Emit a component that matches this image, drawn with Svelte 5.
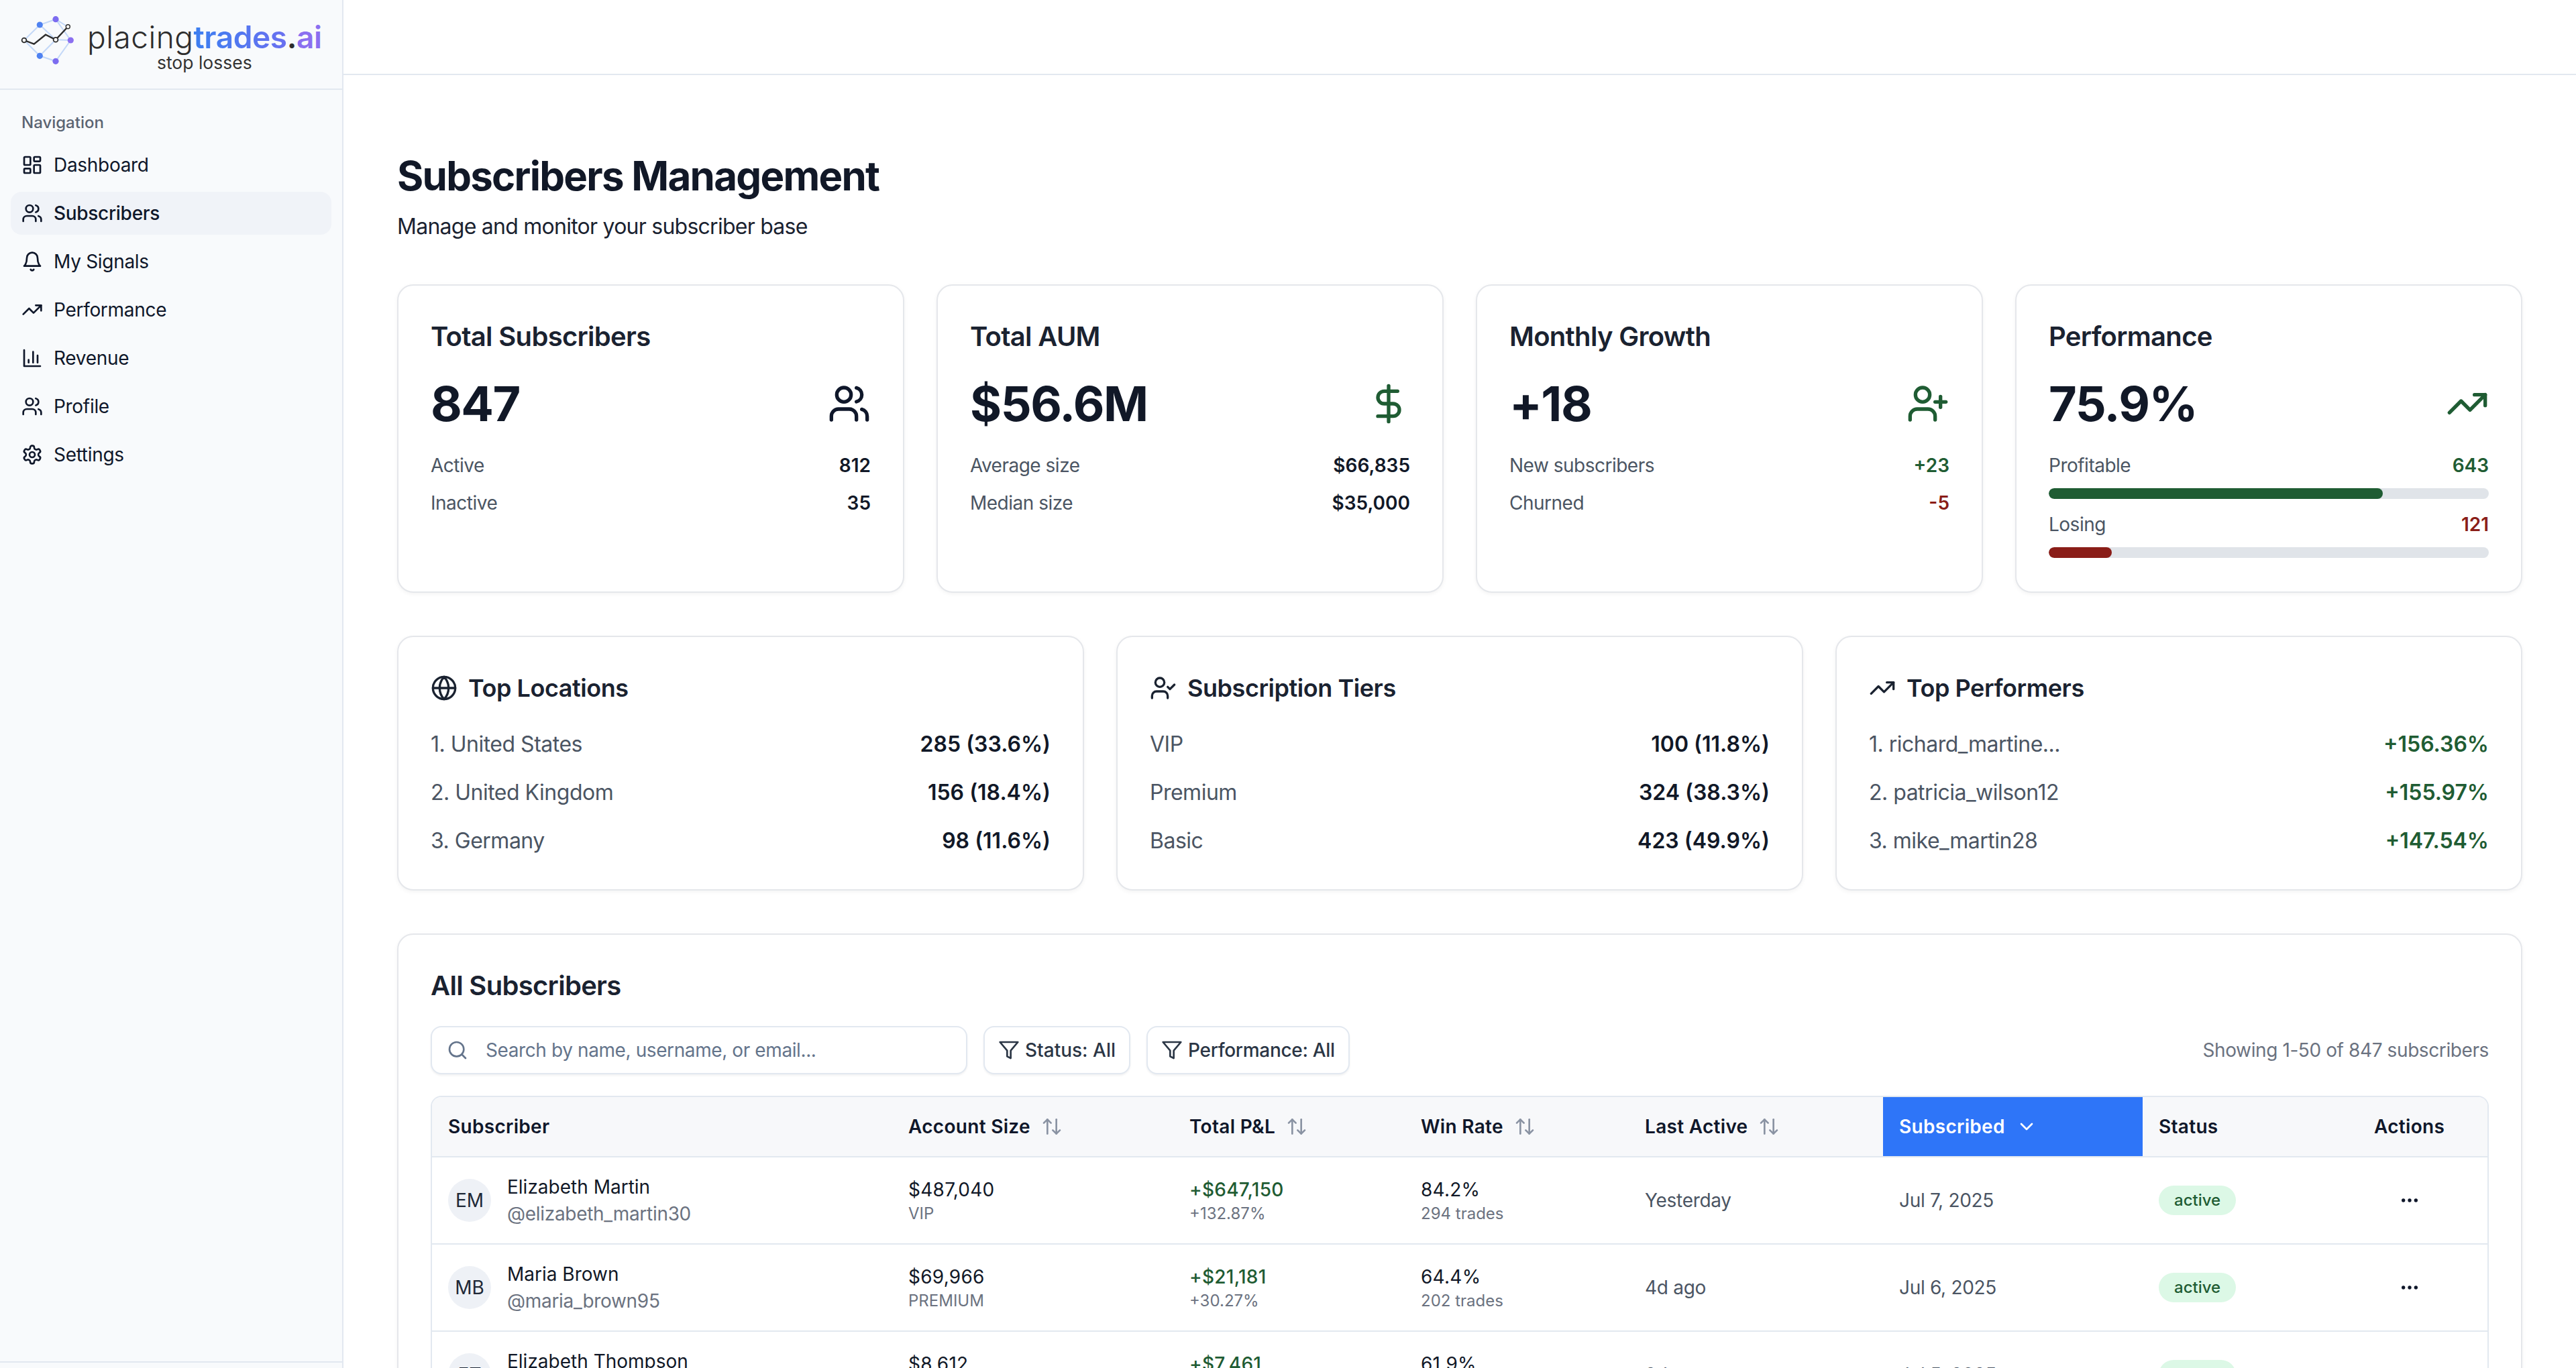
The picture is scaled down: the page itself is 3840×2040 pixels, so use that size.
<script>
  const personBase = ['M16 21v-2a4 4 0 0 0-4-4H6a4 4 0 0 0-4 4v2', 'M5 7a4 4 0 1 0 8 0a4 4 0 1 0-8 0'];
  const icons = {
    dashboard: ['M4 3h5a1 1 0 0 1 1 1v7a1 1 0 0 1-1 1H4a1 1 0 0 1-1-1V4a1 1 0 0 1 1-1z','M15 3h5a1 1 0 0 1 1 1v3a1 1 0 0 1-1 1h-5a1 1 0 0 1-1-1V4a1 1 0 0 1 1-1z','M15 12h5a1 1 0 0 1 1 1v7a1 1 0 0 1-1 1h-5a1 1 0 0 1-1-1v-7a1 1 0 0 1 1-1z','M4 16h5a1 1 0 0 1 1 1v3a1 1 0 0 1-1 1H4a1 1 0 0 1-1-1v-3a1 1 0 0 1 1-1z'],
    users: [...personBase, 'M22 21v-2a4 4 0 0 0-3-3.87', 'M16 3.13a4 4 0 0 1 0 7.75'],
    bell: ['M6 8a6 6 0 0 1 12 0c0 7 3 9 3 9H3s3-2 3-9', 'M10.3 21a1.94 1.94 0 0 0 3.4 0'],
    trending: ['M22 7 13.5 15.5 8.5 10.5 2 17', 'M16 7h6v6'],
    chart: ['M3 3v18h18', 'M18 17V9', 'M13 17V5', 'M8 17v-3'],
    settings: ['M12.22 2h-.44a2 2 0 0 0-2 2v.18a2 2 0 0 1-1 1.73l-.43.25a2 2 0 0 1-2 0l-.15-.08a2 2 0 0 0-2.73.73l-.22.38a2 2 0 0 0 .73 2.73l.15.1a2 2 0 0 1 1 1.72v.51a2 2 0 0 1-1 1.74l-.15.09a2 2 0 0 0-.73 2.73l.22.38a2 2 0 0 0 2.73.73l.15-.08a2 2 0 0 1 2 0l.43.25a2 2 0 0 1 1 1.73V20a2 2 0 0 0 2 2h.44a2 2 0 0 0 2-2v-.18a2 2 0 0 1 1-1.73l.43-.25a2 2 0 0 1 2 0l.15.08a2 2 0 0 0 2.73-.73l.22-.39a2 2 0 0 0-.73-2.73l-.15-.08a2 2 0 0 1-1-1.74v-.5a2 2 0 0 1 1-1.74l.15-.09a2 2 0 0 0 .73-2.73l-.22-.38a2 2 0 0 0-2.73-.73l-.15.08a2 2 0 0 1-2 0l-.43-.25a2 2 0 0 1-1-1.73V4a2 2 0 0 0-2-2z', 'M9 12a3 3 0 1 0 6 0a3 3 0 1 0-6 0'],
    dollar: ['M12 2v20', 'M17 5H9.5a3.5 3.5 0 0 0 0 7h5a3.5 3.5 0 0 1 0 7H6'],
    userPlus: [...personBase, 'M19 8v6', 'M22 11h-6'],
    userCheck: [...personBase, 'M16 11l2 2 4-4'],
    globe: ['M2 12a10 10 0 1 0 20 0a10 10 0 1 0-20 0', 'M12 2a14.5 14.5 0 0 0 0 20 14.5 14.5 0 0 0 0-20', 'M2 12h20'],
    filter: ['M22 3H2l8 9.46V19l4 2v-8.54L22 3z'],
    search: ['M3 11a8 8 0 1 0 16 0a8 8 0 1 0-16 0', 'M21 21l-4.3-4.3'],
    sort: ['M21 16l-4 4-4-4', 'M17 20V4', 'M3 8l4-4 4 4', 'M7 4v16'],
    chevron: ['M6 9l6 6 6-6'],
    dots: ['M11 12a1 1 0 1 0 2 0a1 1 0 1 0-2 0', 'M18 12a1 1 0 1 0 2 0a1 1 0 1 0-2 0', 'M4 12a1 1 0 1 0 2 0a1 1 0 1 0-2 0']
  };

  const nav = [
    ['dashboard', 'Dashboard'], ['users', 'Subscribers', true], ['bell', 'My Signals'],
    ['trending', 'Performance'], ['chart', 'Revenue'], ['users', 'Profile'], ['settings', 'Settings']
  ];

  const stats = [
    { title: 'Total Subscribers', value: '847', icon: 'users', tone: 'ink', rows: [['Active', '812', ''], ['Inactive', '35', '']] },
    { title: 'Total AUM', value: '$56.6M', icon: 'dollar', tone: 'up', rows: [['Average size', '$66,835', ''], ['Median size', '$35,000', '']] },
    { title: 'Monthly Growth', value: '+18', icon: 'userPlus', tone: 'up', rows: [['New subscribers', '+23', 'up'], ['Churned', '-5', 'down']] }
  ];

  const summaries = [
    { title: 'Top Locations', icon: 'globe', tone: '', rows: [['1. United States', '285 (33.6%)'], ['2. United Kingdom', '156 (18.4%)'], ['3. Germany', '98 (11.6%)']] },
    { title: 'Subscription Tiers', icon: 'userCheck', tone: '', rows: [['VIP', '100 (11.8%)'], ['Premium', '324 (38.3%)'], ['Basic', '423 (49.9%)']] },
    { title: 'Top Performers', icon: 'trending', tone: 'up', rows: [['1. richard_martine...', '+156.36%'], ['2. patricia_wilson12', '+155.97%'], ['3. mike_martin28', '+147.54%']] }
  ];

  const widths = [686, 419, 345, 334, 379, 387, 321, 193];

  const subscribers = [
    { initials: 'EM', name: 'Elizabeth Martin', handle: '@elizabeth_martin30', size: '$487,040', tier: 'VIP', pnl: '+$647,150', pct: '+132.87%', win: '84.2%', trades: '294 trades', last: 'Yesterday', date: 'Jul 7, 2025' },
    { initials: 'MB', name: 'Maria Brown', handle: '@maria_brown95', size: '$69,966', tier: 'PREMIUM', pnl: '+$21,181', pct: '+30.27%', win: '64.4%', trades: '202 trades', last: '4d ago', date: 'Jul 6, 2025' },
    { initials: 'ET', name: 'Elizabeth Thompson', handle: '@elizabeth_thompson7', size: '$8,612', tier: 'BASIC', pnl: '+$7,461', pct: '+86.64%', win: '61.9%', trades: '147 trades', last: '2d ago', date: 'Jul 5, 2025' }
  ];
</script>

{#snippet icon(name, cls)}
  <svg class="icon {cls}" viewBox="0 0 24 24" fill="none" stroke="currentColor" stroke-width="2" stroke-linecap="round" stroke-linejoin="round" aria-hidden="true">
    {#each icons[name] as d}<path {d} />{/each}
  </svg>
{/snippet}

{#snippet sortable(label)}
  <span class="th-inner">{label}{@render icon('sort', 'sort')}</span>
{/snippet}

<div class="app">
  <aside class="sidebar">
    <div class="brand">
      <svg class="mark" viewBox="30 22 82 76" aria-hidden="true">
        <g stroke="#c3d8f8" stroke-width="2" fill="none">
          <path d="M36 60 59.3 37 83 28.7 105.3 60 83 91.3 59.3 83.3 36 60" />
          <path d="M59.3 37 83 59.3 105.3 60M83 59.3 59.3 83.3M83 28.7 101 40" />
        </g>
        <circle cx="59.3" cy="37" r="4.6" fill="#4f82f1" />
        <circle cx="59.3" cy="83.3" r="4.6" fill="#4f82f1" />
        <circle cx="83" cy="28.7" r="4.6" fill="#7c6cf0" />
        <circle cx="83" cy="91.3" r="4.6" fill="#7c6cf0" />
        <circle cx="105.3" cy="60" r="4.6" fill="#8b6ff0" />
        <path d="M36 60 50.7 65.7 68 51.7 83 59.3 101.3 39.7" fill="none" stroke="#2d2d2d" stroke-width="2.4" />
        <circle cx="36" cy="60" r="3.4" fill="#fff" stroke="#2d2d2d" stroke-width="1.8" />
        <circle cx="83" cy="59.3" r="3.4" fill="#fff" stroke="#2d2d2d" stroke-width="1.8" />
        <circle cx="101.3" cy="39.7" r="3" fill="#fff" stroke="#2d2d2d" stroke-width="1.4" />
      </svg>
      <div class="wordmark">
        <div class="word"><span class="w-a">placing</span><span class="w-b">trades</span><span class="w-c">.</span><span class="w-d">ai</span></div>
        <div class="tag">stop losses</div>
      </div>
    </div>
    <nav class="nav">
      <div class="nav-label">Navigation</div>
      {#each nav as [ic, label, active]}
        <div class="nav-item" class:active>
          {@render icon(ic, 'i32')}
          <span>{label}</span>
        </div>
      {/each}
    </nav>
    <div class="side-foot"></div>
  </aside>

  <div class="main">
    <header class="topbar"></header>
    <main class="content">
      <h1>Subscribers Management</h1>
      <p class="sub">Manage and monitor your subscriber base</p>

      <section class="grid four">
        {#each stats as s}
          <div class="card stat">
            <h3>{s.title}</h3>
            <div class="value-row">
              <span class="value">{s.value}</span>
              {@render icon(s.icon, `i64 ${s.tone}`)}
            </div>
            <div class="stat-rows">
              {#each s.rows as [k, v, t]}
                <div class="kv"><span class="k">{k}</span><span class="v {t}">{v}</span></div>
              {/each}
            </div>
          </div>
        {/each}
        <div class="card stat">
          <h3>Performance</h3>
          <div class="value-row">
            <span class="value">75.9%</span>
            {@render icon('trending', 'i64 up')}
          </div>
          <div class="perf">
            <div class="kv"><span class="k">Profitable</span><span class="v up">643</span></div>
            <div class="bar"><div class="fill up-bg" style="width:75.9%"></div></div>
            <div class="kv second"><span class="k">Losing</span><span class="v down">121</span></div>
            <div class="bar"><div class="fill down-bg" style="width:14.3%"></div></div>
          </div>
        </div>
      </section>

      <section class="grid three">
        {#each summaries as c}
          <div class="card summary">
            <h3 class="with-icon">{@render icon(c.icon, 'i40')}{c.title}</h3>
            <div class="sum-rows">
              {#each c.rows as [k, v]}
                <div class="sum-row"><span class="k">{k}</span><span class="sv {c.tone}">{v}</span></div>
              {/each}
            </div>
          </div>
        {/each}
      </section>

      <section class="card table-card">
        <h3>All Subscribers</h3>
        <div class="toolbar">
          <div class="search">
            {@render icon('search', 'i32 search-ic')}
            <input type="text" placeholder="Search by name, username, or email..." />
          </div>
          <button class="chip">{@render icon('filter', 'i32')}Status: All</button>
          <button class="chip wide">{@render icon('filter', 'i32')}Performance: All</button>
          <span class="showing">Showing 1-50 of 847 subscribers</span>
        </div>
        <div class="table-wrap">
          <table>
            <colgroup>
              {#each widths as w}<col style="width:{w}px" />{/each}
            </colgroup>
            <thead>
              <tr>
                <th>Subscriber</th>
                <th>{@render sortable('Account Size')}</th>
                <th>{@render sortable('Total P&L')}</th>
                <th>{@render sortable('Win Rate')}</th>
                <th>{@render sortable('Last Active')}</th>
                <th class="sorted"><span class="th-inner">Subscribed{@render icon('chevron', 'sort')}</span></th>
                <th>Status</th>
                <th class="act">Actions</th>
              </tr>
            </thead>
            <tbody>
              {#each subscribers as r}
                <tr>
                  <td>
                    <div class="person">
                      <div class="avatar">{r.initials}</div>
                      <div>
                        <div class="name">{r.name}</div>
                        <div class="handle">{r.handle}</div>
                      </div>
                    </div>
                  </td>
                  <td><div class="main-line">{r.size}</div><div class="sub-line">{r.tier}</div></td>
                  <td><div class="main-line up strong">{r.pnl}</div><div class="sub-line">{r.pct}</div></td>
                  <td><div class="main-line">{r.win}</div><div class="sub-line">{r.trades}</div></td>
                  <td class="soft">{r.last}</td>
                  <td class="soft">{r.date}</td>
                  <td><span class="badge">active</span></td>
                  <td class="act">{@render icon('dots', 'i32 dots')}</td>
                </tr>
              {/each}
            </tbody>
          </table>
        </div>
      </section>
    </main>
  </div>
</div>

<style>
  :global(body) { margin: 0; background: #fff; }
  * { box-sizing: border-box; }
  .app {
    display: flex;
    height: 100vh;
    overflow: hidden;
    font-family: Inter, "Noto Sans", sans-serif;
    color: #0f172a;
  }
  .icon { display: block; flex: none; }
  .i32 { width: 32px; height: 32px; }
  .i40 { width: 40px; height: 40px; }
  .i64 { width: 64px; height: 64px; }
  .up { color: #1f5c33; }
  .down { color: #8a1d18; }
  .ink { color: #0f172a; }

  /* sidebar */
  .sidebar {
    width: 512px;
    flex: none;
    display: flex;
    flex-direction: column;
    background: #f8fafc;
    border-right: 2px solid #e2e8f0;
  }
  .brand {
    height: 134px;
    flex: none;
    display: flex;
    align-items: flex-start;
    gap: 18px;
    padding: 22px 0 0 30px;
    border-bottom: 2px solid #e2e8f0;
  }
  .mark { width: 82px; height: 76px; flex: none; }
  .wordmark { padding-top: 9px; text-align: center; color: #2d2d2d; }
  .word { font-size: 46px; line-height: 48px; font-weight: 300; white-space: nowrap; letter-spacing: -0.4px; }
  .w-a { color: #2d2d2d; letter-spacing: 0.5px; }
  .w-b {
    font-weight: 600;
    background: linear-gradient(90deg, #3b7ff0, #6a70f0);
    -webkit-background-clip: text;
    background-clip: text;
    color: transparent;
  }
  .w-c { font-weight: 600; color: #2d2d2d; }
  .w-d { font-weight: 600; color: #8b6ff0; }
  .tag { font-size: 26.5px; line-height: 28px; font-weight: 400; color: #333; }
  .nav { flex: 1; padding: 16px; display: flex; flex-direction: column; gap: 8px; }
  .nav-label {
    height: 64px;
    margin-bottom: -8px;
    padding-left: 16px;
    display: flex;
    align-items: center;
    font-size: 24px;
    font-weight: 500;
    color: #5b6472;
  }
  .nav-item {
    height: 64px;
    display: flex;
    align-items: center;
    gap: 16px;
    padding: 0 16px;
    border-radius: 16px;
    font-size: 28px;
    letter-spacing: -0.3px;
  }
  .nav-item.active { background: #f0f3f8; font-weight: 500; }
  .side-foot { height: 10px; flex: none; border-top: 2px solid #e2e8f0; }

  /* main */
  .main { flex: 1; min-width: 0; display: flex; flex-direction: column; }
  .topbar { height: 112px; flex: none; border-bottom: 2px solid #e2e8f0; }
  .content { flex: 1; overflow: hidden; padding: 114px 80px 0; }
  h1 { margin: 0; font-size: 60px; line-height: 72px; font-weight: 700; color: #111827; letter-spacing: -1.75px; }
  .sub { margin: 16px 0 62px; font-size: 32px; line-height: 48px; color: #1a2230; letter-spacing: -0.75px; }

  .grid { display: grid; gap: 48px; margin-bottom: 64px; }
  .four { grid-template-columns: repeat(4, 1fr); }
  .three { grid-template-columns: repeat(3, 1fr); }
  .card {
    background: #fff;
    border: 2px solid #e5e7eb;
    border-radius: 24px;
    padding: 48px;
    box-shadow: 0 2px 6px rgba(0, 0, 0, 0.05);
  }
  h3 { margin: 0; font-size: 40px; line-height: 56px; font-weight: 600; color: #1a2230; letter-spacing: -0.7px; }
  .value-row { display: flex; align-items: center; justify-content: space-between; margin-top: 32px; height: 80px; }
  .value { font-size: 72px; line-height: 80px; font-weight: 700; color: #111827; letter-spacing: -1.5px; }
  .stat-rows { margin-top: 32px; display: flex; flex-direction: column; gap: 16px; }
  .perf { margin-top: 32px; padding-bottom: 2px; }
  .kv { display: flex; justify-content: space-between; font-size: 28px; line-height: 40px; }
  .kv.second { margin-top: 18px; }
  .k { color: #4b5563; letter-spacing: -0.5px; }
  .v { font-weight: 600; }
  .v:not(.up):not(.down) { color: #111827; }
  .bar { height: 16px; margin-top: 14px; background: #e0e4e9; border-radius: 8px; overflow: hidden; }
  .perf .kv.second + .bar { margin-top: 14px; }
  .fill { height: 100%; border-radius: 8px; }
  .up-bg { background: #1f5c33; }
  .down-bg { background: #8a1d18; }

  .with-icon { display: flex; align-items: center; gap: 16px; font-size: 36px; letter-spacing: -0.45px; }
  .sum-rows { margin-top: 32px; display: flex; flex-direction: column; gap: 24px; }
  .sum-row { display: flex; justify-content: space-between; font-size: 32px; line-height: 48px; }
  .sv { font-weight: 600; color: #111827; }
  .sv.up { color: #1f5c33; }

  /* table */
  .table-card { padding-bottom: 0; margin-bottom: 64px; }
  .toolbar { display: flex; align-items: center; gap: 24px; margin-top: 32px; }
  .search {
    position: relative;
    width: 800px;
    height: 72px;
    display: flex;
    align-items: center;
    padding-left: 22px;
    border: 2px solid #e2e8f0;
    border-radius: 16px;
    box-shadow: 0 2px 3px rgba(15, 23, 42, 0.06);
    background: #fff;
  }
  .search-ic { color: #64748b; }
  .search input {
    border: 0;
    outline: 0;
    flex: 1;
    min-width: 0;
    margin-left: 26px;
    padding: 0;
    background: transparent;
    font: inherit;
    font-size: 28px;
    letter-spacing: -0.4px;
    color: #0f172a;
  }
  .search input::placeholder { color: #64748b; opacity: 1; }
  .chip {
    height: 72px;
    display: flex;
    align-items: center;
    gap: 8px;
    padding: 0 20px;
    background: #fff;
    border: 2px solid #e2e8f0;
    border-radius: 16px;
    box-shadow: 0 2px 3px rgba(15, 23, 42, 0.06);
    font: inherit;
    font-size: 28px;
    font-weight: 500;
    color: #2b3645;
  }
  .chip.wide { letter-spacing: -0.3px; }
  .showing { margin-left: auto; font-size: 28px; color: #6b7280; letter-spacing: -0.4px; }
  .table-wrap { margin-top: 32px; border: 2px solid #e2e8f0; border-bottom: 0; border-radius: 16px 16px 0 0; overflow: hidden; }
  table { width: 100%; table-layout: fixed; border-collapse: separate; border-spacing: 0; font-size: 28px; }
  th {
    height: 90px;
    padding: 0 24px;
    background: #f7f8fa;
    border-bottom: 2px solid #e2e8f0;
    text-align: left;
    font-weight: 600;
    color: #0f172a;
    white-space: nowrap;
    letter-spacing: 0.3px;
  }
  th.sorted { background: #2e75f8; color: #fff; border-bottom-color: #e2e8f0; }
  .th-inner { display: inline-flex; align-items: center; gap: 16px; }
  .sort { width: 32px; height: 32px; color: #8a93a3; }
  .sorted .sort { color: #fff; }
  td { height: 130px; padding: 0 24px; border-bottom: 2px solid #e2e8f0; vertical-align: middle; }
  th.act, td.act { padding-right: 64px; text-align: center; }
  .person { display: flex; align-items: center; gap: 24px; }
  .avatar {
    width: 64px;
    height: 64px;
    flex: none;
    display: flex;
    align-items: center;
    justify-content: center;
    border-radius: 50%;
    background: #eef1f6;
    font-size: 28px;
    color: #1f2937;
  }
  .name { line-height: 40px; font-weight: 400; color: #111827; white-space: nowrap; }
  .handle { line-height: 40px; color: #6b7280; white-space: nowrap; letter-spacing: -0.3px; }
  .main-line { line-height: 40px; color: #111827; letter-spacing: 0.25px; }
  .main-line.up { color: #1f5c33; }
  .strong { font-weight: 500; }
  .sub-line { line-height: 32px; font-size: 24px; color: #6b7280; }
  .soft { color: #4b5563; letter-spacing: -0.3px; }
  .badge {
    display: inline-block;
    height: 44px;
    line-height: 40px;
    padding: 0 21px;
    border: 2px solid transparent;
    border-radius: 22px;
    background: #dcf8e6;
    color: #1f5c33;
    font-size: 24px;
    font-weight: 500;
  }
  .dots { margin: 0 auto; color: #0f172a; }
</style>
